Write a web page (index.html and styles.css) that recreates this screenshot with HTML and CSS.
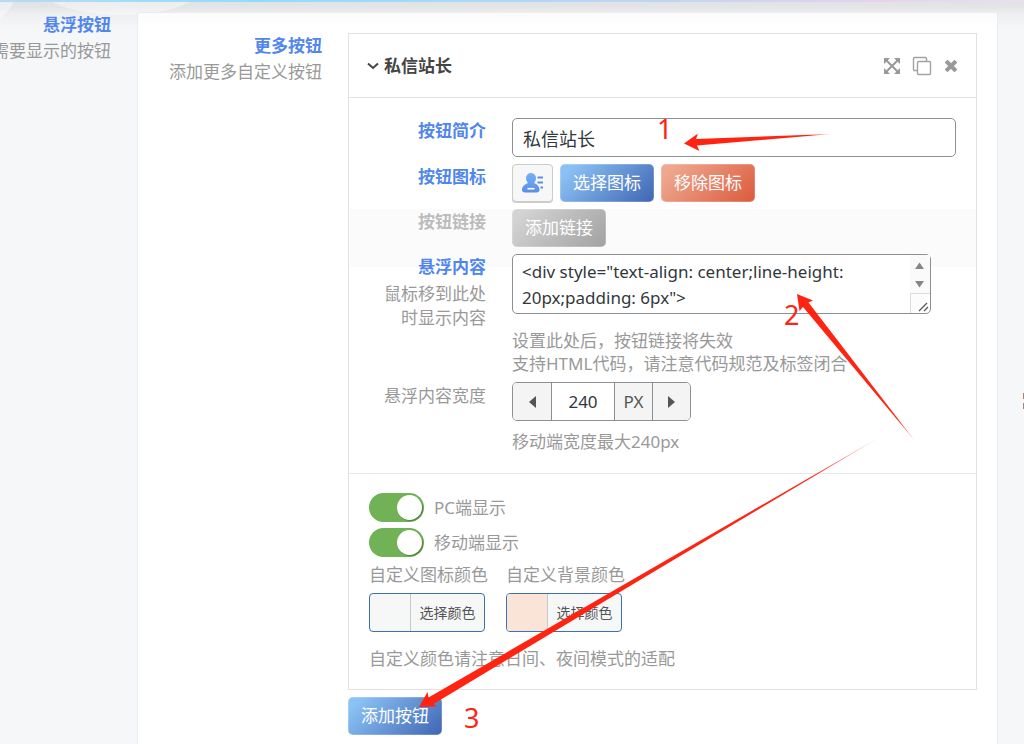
FILE: index.html
```html
<!DOCTYPE html>
<html lang="zh-CN">
<head>
    <meta charset="UTF-8">
    <meta name="viewport" content="width=device-width, initial-scale=1.0">
    <title>悬浮按钮</title>
    <link rel="stylesheet" href="styles.css">
</head>
<body>
    <div class="top-shade"></div>
    <div class="page">
        <div class="side">
            <strong class="title">悬浮按钮</strong>
            <span class="desc">需要显示的按钮</span>
        </div>

        <main class="card">
            <div class="card-label">
                <strong class="title">更多按钮</strong>
                <span class="desc">添加更多自定义按钮</span>
            </div>

            <div class="card-content">
                <section class="panel">
                    <header class="panel-head">
                        <svg class="chevron" width="12" height="8" viewBox="0 0 12 8"><path d="M1 1.5l5 4.5 5-4.5" fill="none" stroke="#444" stroke-width="2"/></svg>
                        <h4>私信站长</h4>
                        <div class="tools">
                            <button type="button" class="tool" aria-label="移动">
                                <svg width="16" height="16" viewBox="0 0 16 16"><path d="M0 0h6L0 6zM16 0v6l-6-6zM0 16v-6l6 6zM16 16h-6l6-6z" fill="#999"/><path d="M2 2l12 12M14 2L2 14" stroke="#999" stroke-width="2"/></svg>
                            </button>
                            <button type="button" class="tool" aria-label="复制">
                                <svg width="20" height="20" viewBox="0 0 20 20" fill="none" stroke="#a3a3a3" stroke-width="1.4"><rect x="5.5" y="5.5" width="13" height="13" rx="1"/><path d="M5 14.500H2.500a1 1 0 0 1-1-1V2.500a1 1 0 0 1 1-1h11a1 1 0 0 1 1 1V5"/></svg>
                            </button>
                            <button type="button" class="tool" aria-label="删除">
                                <svg width="14" height="14" viewBox="0 0 14 14"><path d="M3.500 3.500l7 7M10.500 3.500l-7 7" stroke="#999" stroke-width="4" stroke-linecap="square"/></svg>
                            </button>
                        </div>
                    </header>

                    <div class="fields">
                        <div class="row">
                            <label class="title" for="intro">按钮简介</label>
                            <input class="text" id="intro" type="text" value="私信站长">
                        </div>

                        <div class="row">
                            <span class="title">按钮图标</span>
                            <div class="buttons">
                                <button type="button" class="icon-btn" aria-label="图标">
                                    <svg width="22" height="20" viewBox="0 0 22 20">
                                        <defs><linearGradient id="user" x1="0" y1="0" x2="0" y2="1"><stop offset="0" stop-color="#76b0f6"/><stop offset="1" stop-color="#5c8ee4"/></linearGradient></defs>
                                        <path d="M9 0a5 5 0 0 1 5 5c0 2-1 4-2 5 3 1 5.500 3.500 5.500 6.500 0 2-1 3-3 3H3c-2 0-3-1-3-3C0 13.500 3 11 6 10 5 9 4 7 4 5a5 5 0 0 1 5-5z" fill="url(#user)"/>
                                        <path d="M5.500 15.700h7" stroke="#fff" stroke-width="1.600"/>
                                        <path d="M15.500 4.500H21M15.500 9.500H21M18.500 14.500H21" stroke="#5c8ee4" stroke-width="1.800"/>
                                    </svg>
                                </button>
                                <button type="button" class="btn">选择图标</button>
                                <button type="button" class="btn btn-red">移除图标</button>
                            </div>
                        </div>

                        <div class="row row-off">
                            <span class="title">按钮链接</span>
                            <div class="buttons">
                                <button type="button" class="btn btn-gray">添加链接</button>
                            </div>
                        </div>

                        <div class="row">
                            <div>
                                <label class="title" for="content">悬浮内容</label>
                                <span class="desc">鼠标移到此处时显示内容</span>
                            </div>
                            <div>
                                <div class="area-wrap">
                                    <textarea class="area" id="content" spellcheck="false">&lt;div style="text-align: center;line-height: 20px;padding: 6px"&gt;</textarea>
                                    <svg class="area-bar" width="20" height="58" viewBox="0 0 20 58">
                                        <path d="M0 0h20v39H0z" fill="#fafafa"/>
                                        <path d="M.5 58V38.500H20" fill="#fcfcfc" stroke="#ddd"/>
                                        <path d="M5 14l4.500-6.500L14 14zM5 26h9l-4.500 6.500z" fill="#858585"/>
                                        <path d="M9 56l8-8M14 56l4-4" stroke="#555" stroke-width="1.200"/>
                                    </svg>
                                </div>
                                <p class="hint hint-far">设置此处后，按钮链接将失效<br>支持HTML代码，请注意代码规范及标签闭合</p>
                            </div>
                        </div>

                        <div class="row">
                            <label class="desc desc-name" for="width">悬浮内容宽度</label>
                            <div>
                                <div class="stepper">
                                    <button type="button" aria-label="减少"><svg width="8" height="12" viewBox="0 0 8 12"><path d="M8 0v12L1 6z" fill="#555"/></svg></button>
                                    <input id="width" type="text" value="240">
                                    <span>PX</span>
                                    <button type="button" aria-label="增加"><svg width="8" height="12" viewBox="0 0 8 12"><path d="M0 0v12l7-6z" fill="#555"/></svg></button>
                                </div>
                                <p class="hint">移动端宽度最大240px</p>
                            </div>
                        </div>
                    </div>

                    <div class="options">
                        <label class="switch"><input type="checkbox" checked>PC端显示</label>
                        <label class="switch"><input type="checkbox" checked>移动端显示</label>
                        <div class="colors">
                            <div>
                                <label for="iconColor">自定义图标颜色</label>
                                <button type="button" class="color" id="iconColor"><i class="swatch"></i><span>选择颜色</span></button>
                            </div>
                            <div>
                                <label for="bgColor">自定义背景颜色</label>
                                <button type="button" class="color" id="bgColor"><i class="swatch swatch-peach"></i><span>选择颜色</span></button>
                            </div>
                        </div>
                        <p class="hint hint-far">自定义颜色请注意日间、夜间模式的适配</p>
                    </div>
                </section>

                <button type="button" class="btn">添加按钮</button>
            </div>
        </main>
    </div>

    <!-- numbered arrows over the form -->
    <svg class="notes" width="1024" height="744" viewBox="0 0 1024 744">
        <defs>
            <linearGradient id="fade1" gradientUnits="userSpaceOnUse" x1="684" y1="143" x2="831" y2="134"><stop offset=".85" stop-color="#ff2412"/><stop offset="1" stop-color="#ff2412" stop-opacity=".4"/></linearGradient>
            <linearGradient id="fade2" gradientUnits="userSpaceOnUse" x1="797" y1="294" x2="915" y2="441"><stop offset=".85" stop-color="#ff2412"/><stop offset="1" stop-color="#ff2412" stop-opacity=".4"/></linearGradient>
            <linearGradient id="fade3" gradientUnits="userSpaceOnUse" x1="419" y1="707" x2="880" y2="437"><stop offset=".85" stop-color="#ff2412"/><stop offset="1" stop-color="#ff2412" stop-opacity=".3"/></linearGradient>
        </defs>
        <path d="M684 143.500L698 133.500 696 139 831 134 697 145.500 699.500 151z" fill="url(#fade1)"/>
        <path d="M797 294L813 300.500 808.500 302.500 915 441 803 307 799.500 311z" fill="url(#fade2)"/>
        <path d="M419 707L427.500 692 428.500 697.500 650 569.500 880 437 650 574 433.500 704 437 706.500z" fill="url(#fade3)"/>
        <path d="M1023.500 393v6M1023.500 403v6" stroke="#a98468"/>
        <text x="657" y="139">1</text>
        <text x="784" y="325">2</text>
        <text x="464" y="728">3</text>
    </svg>
</body>
</html>
```

FILE: styles.css
```css
* {
    box-sizing: border-box;
}

body {
    margin: 0;
    min-height: 100vh;
    background-color: #f6f7f9;
    color: #999;
    font-family: "Noto Sans", "Noto Sans CJK SC", sans-serif;
    font-size: 17px;
    line-height: 24px;
    overflow: hidden;
}

button, input, textarea {
    margin: 0;
    padding: 0;
    font: inherit;
}

h4, p {
    margin: 0;
}

.top-shade {
    position: absolute;
    top: 0;
    left: 0;
    width: 100%;
    height: 30px;
    background:
        linear-gradient(90deg, #b9daf5, #8fdcff 25%, #c2d4f5 65%, #e8d0f0 85%, #eadff0) top / 100% 2px no-repeat,
        radial-gradient(ellipse 82px 28px at 121px -13px, rgba(255, 255, 255, .4) 99%, transparent),
        radial-gradient(ellipse 36px 38px at -19px -14px, rgba(255, 255, 255, .4) 99%, transparent),
        linear-gradient(rgba(0, 0, 0, .09), rgba(0, 0, 0, .07) 8px, rgba(0, 0, 0, .03) 14px, rgba(0, 0, 0, 0));
}

.page {
    display: flex;
    min-height: 100vh;
    padding-right: 26px;
}

.side {
    display: flex;
    flex-direction: column;
    align-items: flex-end;
    flex: 0 0 137px;
    min-width: 0;
    padding: 12px 26px 0 0;
    white-space: nowrap;
    z-index: 1;
}

.title {
    display: block;
    color: #5186ed;
    font-weight: bold;
    line-height: 26px;
}

.desc {
    display: block;
}

.side .desc, .card-label .desc {
    line-height: 26px;
}

.card {
    display: flex;
    gap: 26px;
    flex: 1;
    position: relative;
    min-width: 0;
    margin-top: 12px;
    padding: 20px 20px 0;
    background: linear-gradient(#fbfbfb, #fff 14px);
    border: 1px solid #ececec;
    border-bottom: 0;
}

.card-label {
    flex: 0 0 164px;
    text-align: right;
}

.card-content {
    flex: 1;
    min-width: 0;
}

.panel {
    margin-bottom: 7px;
    border: 1px solid #e2e2e2;
}

.panel-head {
    display: flex;
    align-items: center;
    height: 64px;
    padding: 0 18px;
    border-bottom: 1px solid #e2e2e2;
}

.panel-head h4 {
    flex: 1;
    margin-left: 5px;
    color: #444;
    font-size: 17px;
}

.tools {
    display: flex;
    align-items: center;
    gap: 12px;
}

.tool {
    display: flex;
    background: none;
    border: 0;
}

.fields {
    display: flex;
    flex-direction: column;
    gap: 7px;
    padding: 20px;
}

.row {
    display: grid;
    grid-template-columns: 117px 1fr;
    gap: 26px;
    position: relative;
}

.row > :first-child {
    text-align: right;
}

.row-off::before {
    content: "";
    position: absolute;
    top: 0;
    left: -20px;
    right: -20px;
    height: 58px;
    background-color: #fbfbfb;
}

.row-off > * {
    position: relative;
}

.row-off .title {
    color: #bbb;
}

.row .desc {
    padding-top: 2px;
}

.text {
    width: 100%;
    height: 39px;
    padding: 0 10px;
    background-color: #fff;
    border: 1px solid #8c8f94;
    border-radius: 5px;
    color: #32373c;
    font-size: 18px;
}

.buttons {
    display: flex;
    gap: 7px;
}

.btn {
    height: 38px;
    padding: 0 12px;
    background: linear-gradient(135deg, #8bc2f5 10%, #3f65b3) border-box;
    border: 1px solid rgba(255, 255, 255, .2);
    border-radius: 5px;
    color: #fff;
}

.btn-red {
    background: linear-gradient(135deg, #eea88f 10%, #dc5a3c) border-box;
}

.btn-gray {
    background: linear-gradient(135deg, #d3d3d3 10%, #a1a1a1) border-box;
}

.icon-btn {
    display: flex;
    align-items: center;
    justify-content: center;
    width: 41px;
    height: 38px;
    background-color: #f7f7f7;
    border: 1px solid #ccc;
    border-radius: 4px;
    box-shadow: 0 1px 0 #ccc;
}

.area-wrap {
    position: relative;
    width: 419px;
    max-width: 100%;
}

.area {
    display: block;
    width: 100%;
    height: 60px;
    padding: 4px 60px 4px 9px;
    background-color: #fff;
    border: 1px solid #8c8f94;
    border-radius: 5px;
    color: #32373c;
    font-size: 17px;
    line-height: 26px;
    overflow: hidden;
    resize: none;
}

.area-bar {
    position: absolute;
    top: 1px;
    right: 1px;
}

.hint {
    margin-top: 9px;
    line-height: 23px;
}

.hint-far {
    margin-top: 15px;
}

.stepper {
    display: flex;
    width: max-content;
    height: 39px;
    border: 1px solid #8c8f94;
    border-radius: 5px;
    overflow: hidden;
}

.stepper > * {
    display: flex;
    align-items: center;
    justify-content: center;
    width: 38px;
    background-color: #f4f4f4;
    border: 0;
    color: #555;
}

.stepper > * + * {
    border-left: 1px solid #8c8f94;
}

.stepper input {
    width: 63px;
    background-color: #fff;
    color: #32373c;
    text-align: center;
}

.options {
    padding: 19px 20px;
    border-top: 1px solid #e8e8e8;
}

.switch {
    display: flex;
    align-items: center;
    gap: 10px;
    height: 29px;
    margin-bottom: 6px;
}

.switch input {
    appearance: none;
    display: flex;
    justify-content: flex-end;
    width: 55px;
    height: 29px;
    padding: 2px;
    background-color: #70b255;
    border-radius: 15px;
}

.switch input::before {
    content: "";
    width: 25px;
    height: 25px;
    background-color: #fff;
    border-radius: 50%;
    box-shadow: 1px 1px 1px rgba(0, 0, 0, .3);
}

.colors {
    display: flex;
    gap: 18px;
}

.colors label {
    display: block;
    margin-bottom: 6px;
}

.color {
    display: flex;
    width: 116px;
    height: 39px;
    background-color: #f6f8f8;
    border: 1px solid #3f6fb3;
    border-radius: 4px;
    color: #555;
    font-size: 14px;
    line-height: 37px;
    overflow: hidden;
}

.color span {
    flex: 1;
}

.swatch {
    width: 41px;
    height: 37px;
    border-right: 1px solid #c5c9cc;
}

.swatch-peach {
    background-color: #fae4d7;
}

.notes {
    position: absolute;
    top: 0;
    left: 0;
    pointer-events: none;
}

.notes text {
    fill: #ff2412;
    font-family: "Noto Sans", sans-serif;
    font-size: 27px;
}
```
